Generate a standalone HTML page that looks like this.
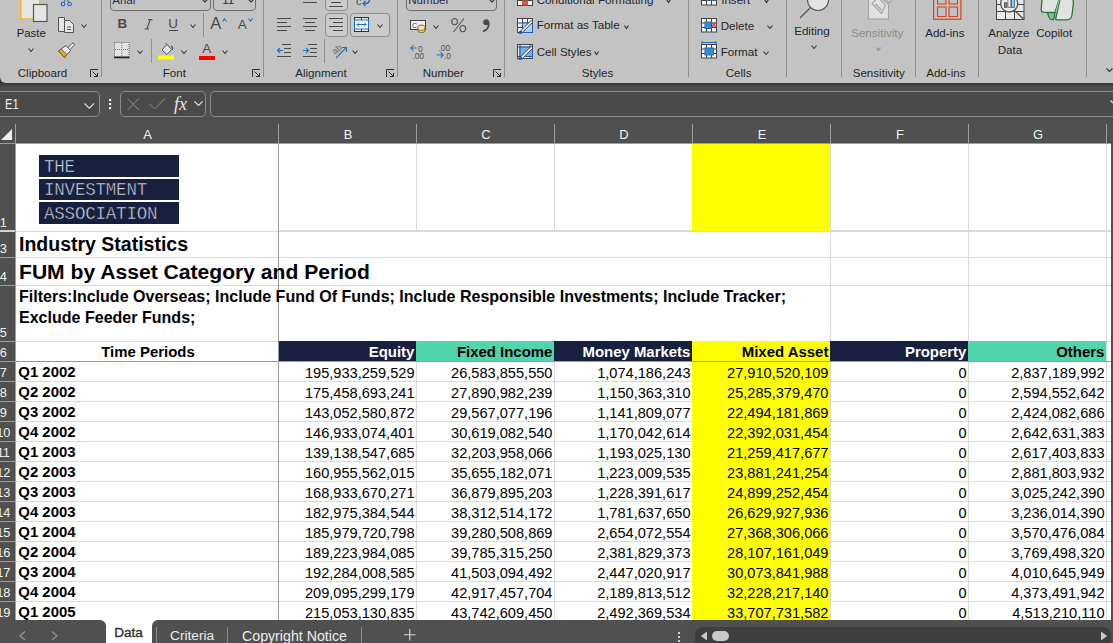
<!DOCTYPE html><html><head><meta charset="utf-8"><style>
*{margin:0;padding:0;box-sizing:border-box}
html,body{width:1113px;height:643px;overflow:hidden;background:#505050;font-family:"Liberation Sans", sans-serif}
.a{position:absolute}
.rl{position:absolute;font-size:11.6px;color:#262626;white-space:nowrap;line-height:1}
.sep{position:absolute;width:1px;background:#8f8f8f}
.cell{position:absolute;white-space:nowrap;line-height:1;color:#000}
</style></head><body>

<div class="a" style="left:0;top:0;width:1113px;height:83px;background:#3c3c3c"></div>
<div class="a" style="left:0;top:83px;width:1113px;height:5px;background:linear-gradient(#383838,#505050)"></div>
<div class="a" style="left:0;top:0;width:1113px;height:82.5px;background:#c3c3c3;border-bottom-left-radius:6px"></div>
<div class="sep" style="left:101px;top:0px;height:77px"></div>
<div class="sep" style="left:263px;top:0px;height:77px"></div>
<div class="sep" style="left:397px;top:0px;height:77px"></div>
<div class="sep" style="left:504px;top:0px;height:77px"></div>
<div class="sep" style="left:688px;top:0px;height:77px"></div>
<div class="sep" style="left:786px;top:0px;height:77px"></div>
<div class="sep" style="left:841px;top:0px;height:77px"></div>
<div class="sep" style="left:915px;top:0px;height:77px"></div>
<div class="sep" style="left:978px;top:0px;height:77px"></div>
<div class="sep" style="left:1086px;top:0px;height:77px"></div>
<svg class="a" style="left:20px;top:-4px;overflow:visible" width="30" height="26" viewBox="0 0 30 26"><rect x="0.8" y="0" width="19" height="23" fill="#e6e6e6" stroke="#f0b73a" stroke-width="1.6"/><rect x="13.5" y="8.5" width="13.5" height="17" fill="#e4e4e4" stroke="#555" stroke-width="1.2"/></svg>
<svg class="a" style="left:61px;top:-4px;overflow:visible" width="11" height="11" viewBox="0 0 11 11"><circle cx="2" cy="8" r="1.8" fill="none" stroke="#1f6fc0" stroke-width="1.1"/><circle cx="8.5" cy="8" r="1.8" fill="none" stroke="#1f6fc0" stroke-width="1.1"/><path d="M3 6 L6 0 M7.5 6 L4.5 0" stroke="#555" stroke-width="1"/></svg>
<div class="rl" style="left:16.8px;top:27.7px;font-size:11.3px;color:#262626;">Paste</div>
<svg class="a" style="left:28px;top:48px;overflow:visible" width="6" height="4" viewBox="0 0 6 4"><path d="M0.5 0.5 L3.0 3.5 L5.5 0.5" fill="none" stroke="#333" stroke-width="1.1"/></svg>
<svg class="a" style="left:58px;top:17px;overflow:visible" width="16" height="16" viewBox="0 0 16 16"><path d="M0.5 0.5 H6.5 V14.5 H0.5 Z" fill="#e4e4e4" stroke="#555" stroke-width="1"/><path d="M6.5 3.5 H11.5 L15.5 7.5 V15.5 H6.5 Z" fill="#e8e8e8" stroke="#555" stroke-width="1"/><path d="M9 10 H13 M9 12.5 H13" stroke="#555" stroke-width="1"/></svg>
<svg class="a" style="left:81px;top:24px;overflow:visible" width="6" height="4" viewBox="0 0 6 4"><path d="M0.5 0.5 L3.0 3.5 L5.5 0.5" fill="none" stroke="#333" stroke-width="1.1"/></svg>
<svg class="a" style="left:57px;top:42px;overflow:visible" width="18" height="17" viewBox="0 0 18 17"><path d="M10.5 6 L15 1.5 A1.4 1.4 0 0 1 17 3.5 L12.5 8" fill="#e6e6e6" stroke="#555" stroke-width="1"/><path d="M1.5 9 L9 3.5 L13.5 8.5 L7.5 15.5 Z" fill="#ececec" stroke="#555" stroke-width="1"/><path d="M1.5 9 L7.5 15.5 L10 12.5 L4 7 Z" fill="#e8a830" stroke="#7a5010" stroke-width="0.9"/></svg>
<div class="rl" style="left:17.7px;top:67.2px;font-size:11.6px;color:#262626;">Clipboard</div>
<svg class="a" style="left:89.5px;top:69px;overflow:visible" width="9" height="9" viewBox="0 0 9 9"><path d="M0.5 8 V0.5 H8" fill="none" stroke="#333" stroke-width="1"/><path d="M2.5 2.5 L7.5 7.5 M4 7.5 H7.5 V4" fill="none" stroke="#333" stroke-width="1"/></svg>
<div class="a" style="left:110px;top:-6px;width:101px;height:17px;border:1px solid #6e6e6e;border-radius:4px"></div>
<div class="rl" style="left:112.2px;top:-6.2px;font-size:11.6px;color:#2a2a50;">Arial</div>
<svg class="a" style="left:202px;top:-1px;overflow:visible" width="6" height="4" viewBox="0 0 6 4"><path d="M0.5 0.5 L3 3 L5.5 0.5" fill="none" stroke="#333" stroke-width="1.1"/></svg>
<div class="a" style="left:213px;top:-6px;width:43px;height:17px;border:1px solid #6e6e6e;border-radius:4px"></div>
<div class="rl" style="left:222.2px;top:-6.2px;font-size:11.6px;color:#2a2a50;">11</div>
<svg class="a" style="left:248px;top:-1px;overflow:visible" width="6" height="4" viewBox="0 0 6 4"><path d="M0.5 0.5 L3 3 L5.5 0.5" fill="none" stroke="#333" stroke-width="1.1"/></svg>
<div class="rl" style="left:117.5px;top:17.1px;font-size:13.4px;color:#4a4a4a;font-weight:bold">B</div>
<svg class="a" style="left:144px;top:19px;overflow:visible" width="9" height="11" viewBox="0 0 9 11"><path d="M4 0.6 H8.5 M0.5 10 H5 M6.3 0.6 L2.8 10" fill="none" stroke="#555" stroke-width="1.2"/></svg>
<div class="rl" style="left:168.2px;top:17.1px;font-size:13.4px;color:#4a4a4a;">U</div>
<div class="a" style="left:169px;top:30px;width:9px;height:1px;background:#4a4a4a"></div>
<svg class="a" style="left:190px;top:24px;overflow:visible" width="6" height="4" viewBox="0 0 6 4"><path d="M0.5 0.5 L3.0 3.5 L5.5 0.5" fill="none" stroke="#333" stroke-width="1.1"/></svg>
<div class="sep" style="left:203px;top:13px;height:24px"></div>
<div class="rl" style="left:210.2px;top:15.2px;font-size:16.5px;color:#4a4a4a;">A</div>
<svg class="a" style="left:222px;top:18px;overflow:visible" width="5" height="4" viewBox="0 0 5 4"><path d="M0.5 3.5 L2.5 0.8 L4.5 3.5" fill="none" stroke="#1f6fc0" stroke-width="1.1"/></svg>
<div class="rl" style="left:237.7px;top:18.0px;font-size:13.5px;color:#4a4a4a;">A</div>
<svg class="a" style="left:247.5px;top:18px;overflow:visible" width="5" height="4" viewBox="0 0 5 4"><path d="M0.5 0.5 L2.5 3.2 L4.5 0.5" fill="none" stroke="#1f6fc0" stroke-width="1.1"/></svg>
<svg class="a" style="left:114px;top:42px;overflow:visible" width="16" height="17" viewBox="0 0 16 17"><rect x="0.5" y="0.5" width="14.5" height="14" fill="#e2e2e2" stroke="#666" stroke-width="1" stroke-dasharray="1 1"/><path d="M7.75 1 V14.5 M1 7.5 H15" stroke="#777" stroke-width="1" stroke-dasharray="1 1"/><path d="M0 15.5 H15.5" stroke="#222" stroke-width="1.6"/></svg>
<svg class="a" style="left:137px;top:49.5px;overflow:visible" width="6" height="4" viewBox="0 0 6 4"><path d="M0.5 0.5 L3.0 3.5 L5.5 0.5" fill="none" stroke="#333" stroke-width="1.1"/></svg>
<div class="sep" style="left:151px;top:39px;height:24px"></div>
<svg class="a" style="left:158px;top:42px;overflow:visible" width="17" height="18" viewBox="0 0 17 18"><path d="M4 8 L9 2.5 L13.5 7.5 L9 12.5 Z" fill="#e8e8e8" stroke="#555" stroke-width="1"/><path d="M9 2.5 L7.5 1" stroke="#555" stroke-width="1"/><path d="M13 4 Q15 5 14.5 8" fill="none" stroke="#1f6fc0" stroke-width="1.4"/><rect x="0" y="13.5" width="16" height="4" fill="#ffff00"/></svg>
<svg class="a" style="left:181px;top:49.5px;overflow:visible" width="6" height="4" viewBox="0 0 6 4"><path d="M0.5 0.5 L3.0 3.5 L5.5 0.5" fill="none" stroke="#333" stroke-width="1.1"/></svg>
<div class="rl" style="left:202.2px;top:41.6px;font-size:13.4px;color:#4a4a4a;">A</div>
<div class="a" style="left:199px;top:55.5px;width:16px;height:4px;background:#ff0000"></div>
<svg class="a" style="left:222px;top:49.5px;overflow:visible" width="6" height="4" viewBox="0 0 6 4"><path d="M0.5 0.5 L3.0 3.5 L5.5 0.5" fill="none" stroke="#333" stroke-width="1.1"/></svg>
<div class="rl" style="left:162.7px;top:67.2px;font-size:11.6px;color:#262626;">Font</div>
<svg class="a" style="left:252px;top:69px;overflow:visible" width="9" height="9" viewBox="0 0 9 9"><path d="M0.5 8 V0.5 H8" fill="none" stroke="#333" stroke-width="1"/><path d="M2.5 2.5 L7.5 7.5 M4 7.5 H7.5 V4" fill="none" stroke="#333" stroke-width="1"/></svg>
<svg class="a" style="left:303px;top:2px;overflow:visible" width="15" height="2" viewBox="0 0 15 2"><path d="M0 0.5 H14" stroke="#4a4a4a" stroke-width="1"/></svg>
<div class="a" style="left:324.5px;top:-14px;width:23px;height:24.5px;border:1px solid #8e8e8e;border-radius:4px;background:#cbcbcb"></div>
<svg class="a" style="left:329px;top:1px;overflow:visible" width="15" height="6" viewBox="0 0 15 6"><path d="M2 1.5 H12 M0 5.5 H14" stroke="#4a4a4a" stroke-width="1"/></svg>
<svg class="a" style="left:356px;top:-4px;overflow:visible" width="15" height="11" viewBox="0 0 15 11"><text x="0" y="9" font-size="11" fill="#555" font-family="Liberation Sans">c</text><path d="M11 0 C14.5 1 14.5 7.5 9.5 7.5 H7 M9.5 5 L7 7.5 L9.5 10" fill="none" stroke="#1f6fc0" stroke-width="1.3"/></svg>
<svg class="a" style="left:277px;top:18px;overflow:visible" width="15" height="14" viewBox="0 0 15 14"><path d="M0.0 0.5 H14.0 M0.0 4.5 H10.0 M0.0 8.5 H14.0 M0.0 12.5 H10.0 " stroke="#4a4a4a" stroke-width="1"/></svg>
<svg class="a" style="left:303px;top:18px;overflow:visible" width="15" height="14" viewBox="0 0 15 14"><path d="M0.0 0.5 H14.0 M2.0 4.5 H12.0 M0.0 8.5 H14.0 M2.0 12.5 H12.0 " stroke="#4a4a4a" stroke-width="1"/></svg>
<div class="a" style="left:324.5px;top:13px;width:23px;height:23.5px;border:1px solid #8e8e8e;border-radius:4px;background:#cbcbcb"></div>
<svg class="a" style="left:329px;top:18px;overflow:visible" width="15" height="14" viewBox="0 0 15 14"><path d="M0.0 0.5 H14.0 M4.0 4.5 H14.0 M0.0 8.5 H14.0 M4.0 12.5 H14.0 " stroke="#4a4a4a" stroke-width="1"/></svg>
<div class="a" style="left:350px;top:13px;width:39.5px;height:23.5px;border:1px solid #8e8e8e;border-radius:4px;background:#cbcbcb"></div>
<svg class="a" style="left:354px;top:17px;overflow:visible" width="15" height="15" viewBox="0 0 15 15"><rect x="0.5" y="0.5" width="14" height="14" fill="#e8e8e8" stroke="#333" stroke-width="1"/><path d="M7.5 0.5 V3 M7.5 12 V14.5" stroke="#333" stroke-width="1"/><rect x="0.5" y="3" width="14" height="9" fill="#fafafa" stroke="#1f6fc0" stroke-width="1"/><path d="M3 7.5 H12 M5 5.5 L3 7.5 L5 9.5 M10 5.5 L12 7.5 L10 9.5" fill="none" stroke="#1f6fc0" stroke-width="1"/></svg>
<svg class="a" style="left:377px;top:23.5px;overflow:visible" width="6" height="4" viewBox="0 0 6 4"><path d="M0.5 0.5 L3.0 3.5 L5.5 0.5" fill="none" stroke="#333" stroke-width="1.1"/></svg>
<svg class="a" style="left:277px;top:43.5px;overflow:visible" width="15" height="14" viewBox="0 0 15 14"><path d="M5 0.5 H14 M7 4.5 H14 M7 8.5 H14 M0 12.5 H14" stroke="#4a4a4a" stroke-width="1"/><path d="M0.5 6.5 H6 M3 4 L0.5 6.5 L3 9" fill="none" stroke="#1f6fc0" stroke-width="1.1"/></svg>
<svg class="a" style="left:303px;top:43.5px;overflow:visible" width="15" height="14" viewBox="0 0 15 14"><path d="M5 0.5 H14 M7 4.5 H14 M7 8.5 H14 M0 12.5 H14" stroke="#4a4a4a" stroke-width="1"/><path d="M0 6.5 H5.5 M3 4 L5.5 6.5 L3 9" fill="none" stroke="#1f6fc0" stroke-width="1.1"/></svg>
<div class="sep" style="left:324px;top:39px;height:24px"></div>
<svg class="a" style="left:331px;top:43px;overflow:visible" width="17" height="16" viewBox="0 0 17 16"><text x="1" y="10" font-size="9" fill="#666" font-family="Liberation Sans" transform="rotate(-40 5 7)">ab</text><path d="M5 15 L15.5 4.5 M11 4.5 H15.5 V9" fill="none" stroke="#1f6fc0" stroke-width="1.1"/></svg>
<svg class="a" style="left:352px;top:49.5px;overflow:visible" width="6" height="4" viewBox="0 0 6 4"><path d="M0.5 0.5 L3.0 3.5 L5.5 0.5" fill="none" stroke="#333" stroke-width="1.1"/></svg>
<div class="rl" style="left:295.2px;top:67.2px;font-size:11.6px;color:#262626;">Alignment</div>
<svg class="a" style="left:386px;top:69px;overflow:visible" width="9" height="9" viewBox="0 0 9 9"><path d="M0.5 8 V0.5 H8" fill="none" stroke="#333" stroke-width="1"/><path d="M2.5 2.5 L7.5 7.5 M4 7.5 H7.5 V4" fill="none" stroke="#333" stroke-width="1"/></svg>
<div class="a" style="left:406px;top:-6px;width:91px;height:16.5px;border:1px solid #6e6e6e;border-radius:4px"></div>
<div class="rl" style="left:408.2px;top:-6.2px;font-size:11.6px;color:#2a2a50;">Number</div>
<svg class="a" style="left:489px;top:-1.5px;overflow:visible" width="6" height="4" viewBox="0 0 6 4"><path d="M0.5 0.5 L3 3 L5.5 0.5" fill="none" stroke="#333" stroke-width="1.1"/></svg>
<svg class="a" style="left:410px;top:20px;overflow:visible" width="17" height="13" viewBox="0 0 17 13"><rect x="0.5" y="0.5" width="15" height="9" fill="#f0f0f0" stroke="#444" stroke-width="1"/><text x="2" y="8" font-size="7" fill="#444" font-family="Liberation Sans">C</text><ellipse cx="11.5" cy="6.5" rx="3.5" ry="1.4" fill="#f0e0b0" stroke="#7a5a10" stroke-width="0.9"/><path d="M8 6.5 V11 A3.5 1.4 0 0 0 15 11 V6.5" fill="#f0e0b0" stroke="#7a5a10" stroke-width="0.9"/><path d="M8 9 A3.5 1.4 0 0 0 15 9" fill="none" stroke="#7a5a10" stroke-width="0.8"/></svg>
<svg class="a" style="left:433px;top:24.5px;overflow:visible" width="6" height="4" viewBox="0 0 6 4"><path d="M0.5 0.5 L3.0 3.5 L5.5 0.5" fill="none" stroke="#333" stroke-width="1.1"/></svg>
<svg class="a" style="left:451px;top:18px;overflow:visible" width="16" height="15" viewBox="0 0 16 15"><ellipse cx="3.6" cy="3.6" rx="2.9" ry="3.1" fill="none" stroke="#555" stroke-width="1.1"/><ellipse cx="11.8" cy="10.6" rx="2.9" ry="3.1" fill="none" stroke="#555" stroke-width="1.1"/><path d="M13 0.5 L2.5 14" stroke="#555" stroke-width="1.1"/></svg>
<svg class="a" style="left:481.5px;top:19px;overflow:visible" width="8" height="13" viewBox="0 0 8 13"><circle cx="4.2" cy="3.2" r="3" fill="#4a4a4a"/><path d="M6.8 3.5 C7.3 8 5 11 1 12.5" fill="none" stroke="#4a4a4a" stroke-width="1.6"/></svg>
<svg class="a" style="left:410px;top:43px;overflow:visible" width="16" height="16" viewBox="0 0 16 16"><path d="M1 5 H6.5 M3.5 2 L0.8 5 L3.5 8" fill="none" stroke="#1f6fc0" stroke-width="1.1"/><text x="8" y="8.5" font-size="8.5" fill="#555" font-family="Liberation Sans">0</text><text x="2.5" y="15.5" font-size="8.5" fill="#555" font-family="Liberation Sans">.00</text></svg>
<svg class="a" style="left:436px;top:43px;overflow:visible" width="16" height="16" viewBox="0 0 16 16"><text x="2.5" y="8" font-size="8.5" fill="#555" font-family="Liberation Sans">.00</text><path d="M0.5 12 H7 M4.5 9 L7.2 12 L4.5 15" fill="none" stroke="#1f6fc0" stroke-width="1.1"/><text x="8" y="15.5" font-size="8.5" fill="#555" font-family="Liberation Sans">.0</text></svg>
<div class="rl" style="left:422.7px;top:67.2px;font-size:11.6px;color:#262626;">Number</div>
<svg class="a" style="left:493px;top:69px;overflow:visible" width="9" height="9" viewBox="0 0 9 9"><path d="M0.5 8 V0.5 H8" fill="none" stroke="#333" stroke-width="1"/><path d="M2.5 2.5 L7.5 7.5 M4 7.5 H7.5 V4" fill="none" stroke="#333" stroke-width="1"/></svg>
<svg class="a" style="left:517px;top:-9px;overflow:visible" width="16" height="15" viewBox="0 0 16 15"><rect x="0.5" y="0.5" width="15" height="14" fill="#f4f4f4" stroke="#444" stroke-width="1"/><path d="M0.5 5 H15.5 M0.5 9.5 H15.5 M5.5 0.5 V14.5 M10.5 0.5 V14.5" stroke="#444" stroke-width="1"/><rect x="5" y="9.5" width="6" height="5" fill="#d9534f"/></svg>
<div class="rl" style="left:536.7px;top:-6.2px;font-size:11.6px;color:#262626;">Conditional Formatting</div>
<svg class="a" style="left:666px;top:-1px;overflow:visible" width="5" height="4" viewBox="0 0 5 4"><path d="M0.5 0.5 L2.5 3.5 L4.5 0.5" fill="none" stroke="#333" stroke-width="1.1"/></svg>
<svg class="a" style="left:517px;top:18px;overflow:visible" width="16" height="15" viewBox="0 0 16 15"><rect x="0.5" y="0.5" width="15" height="14" fill="#f4f4f4" stroke="#444" stroke-width="1"/><path d="M0.5 5 H15.5 M0.5 9.5 H15.5 M5.5 0.5 V14.5 M10.5 0.5 V14.5" stroke="#444" stroke-width="1"/><rect x="5.5" y="5" width="10" height="9.5" fill="#a8d4f8" stroke="#1a5fb4" stroke-width="1"/><path d="M3 13.5 L13.5 3 A1.2 1.2 0 0 1 15.2 4.7 L4.7 15.2 Z" fill="#f2f2f2" stroke="#333" stroke-width="0.9"/><path d="M1.5 15.8 C1.8 13.5 2.5 12.5 4 12.5 L5.5 14 C5.5 15.5 4 16.3 1.5 15.8 Z" fill="#1a5fb4"/></svg>
<div class="rl" style="left:536.7px;top:19.3px;font-size:11.6px;color:#262626;">Format as Table</div>
<svg class="a" style="left:624px;top:24.5px;overflow:visible" width="5" height="4" viewBox="0 0 5 4"><path d="M0.5 0.5 L2.5 3.5 L4.5 0.5" fill="none" stroke="#333" stroke-width="1.1"/></svg>
<svg class="a" style="left:517px;top:44px;overflow:visible" width="16" height="15" viewBox="0 0 16 15"><rect x="0.5" y="0.5" width="15" height="14" fill="#f4f4f4" stroke="#444" stroke-width="1"/><path d="M0.5 3 H15.5 M0.5 12.5 H15.5 M3 0.5 V14.5 M13 0.5 V14.5" stroke="#444" stroke-width="1"/><rect x="3" y="3" width="12.5" height="9.5" fill="#70b0e8" stroke="#1a5fb4" stroke-width="1"/><path d="M3 13.5 L13.5 3 A1.2 1.2 0 0 1 15.2 4.7 L4.7 15.2 Z" fill="#f2f2f2" stroke="#333" stroke-width="0.9"/><path d="M1.5 15.8 C1.8 13.5 2.5 12.5 4 12.5 L5.5 14 C5.5 15.5 4 16.3 1.5 15.8 Z" fill="#1a5fb4"/></svg>
<div class="rl" style="left:536.7px;top:45.6px;font-size:11.6px;color:#262626;">Cell Styles</div>
<svg class="a" style="left:594px;top:50.5px;overflow:visible" width="5" height="4" viewBox="0 0 5 4"><path d="M0.5 0.5 L2.5 3.5 L4.5 0.5" fill="none" stroke="#333" stroke-width="1.1"/></svg>
<div class="rl" style="left:581.7px;top:67.2px;font-size:11.6px;color:#262626;">Styles</div>
<svg class="a" style="left:701px;top:-9px;overflow:visible" width="16" height="15" viewBox="0 0 16 15"><rect x="0.5" y="0.5" width="15" height="13.5" fill="#f4f4f4" stroke="#444" stroke-width="1"/><path d="M0.5 5 H15.5 M0.5 9.5 H15.5 M5.5 0.5 V14 M10.5 0.5 V14" stroke="#444" stroke-width="1"/><rect x="5.5" y="5" width="9" height="4.5" fill="#3d8bd8"/></svg>
<div class="rl" style="left:721.2px;top:-6.2px;font-size:11.6px;color:#262626;">Insert</div>
<svg class="a" style="left:764px;top:-1px;overflow:visible" width="5" height="4" viewBox="0 0 5 4"><path d="M0.5 0.5 L2.5 3.5 L4.5 0.5" fill="none" stroke="#333" stroke-width="1.1"/></svg>
<svg class="a" style="left:701px;top:17.5px;overflow:visible" width="16" height="15" viewBox="0 0 16 15"><rect x="0.5" y="0.5" width="15" height="13.5" fill="#f4f4f4" stroke="#444" stroke-width="1"/><path d="M0.5 5 H15.5 M0.5 9.5 H15.5 M5.5 0.5 V14 M10.5 0.5 V14" stroke="#444" stroke-width="1"/><rect x="4" y="4" width="6" height="6.5" fill="#3d8bd8" stroke="#1f6fc0" stroke-width="1"/><path d="M10.5 4 L15 9.5 M15 4 L10.5 9.5" stroke="#d9363e" stroke-width="1.2"/></svg>
<div class="rl" style="left:720.7px;top:19.8px;font-size:11.6px;color:#262626;">Delete</div>
<svg class="a" style="left:766.5px;top:24.5px;overflow:visible" width="6" height="4" viewBox="0 0 6 4"><path d="M0.5 0.5 L3.0 3.5 L5.5 0.5" fill="none" stroke="#333" stroke-width="1.1"/></svg>
<svg class="a" style="left:701px;top:44px;overflow:visible" width="16" height="15" viewBox="0 0 16 15"><rect x="0.5" y="0.5" width="15" height="13.5" fill="#f4f4f4" stroke="#444" stroke-width="1"/><path d="M0.5 5 H15.5 M0.5 9.5 H15.5 M5.5 0.5 V14 M10.5 0.5 V14" stroke="#444" stroke-width="1"/><rect x="4" y="4" width="8.5" height="7" fill="#3d8bd8" stroke="#1f6fc0" stroke-width="1"/><path d="M1 -1.5 H15 M1 -3 V0 M15 -3 V0" stroke="#1f6fc0" stroke-width="1"/></svg>
<div class="rl" style="left:720.7px;top:45.7px;font-size:11.6px;color:#262626;">Format</div>
<svg class="a" style="left:762.5px;top:50.5px;overflow:visible" width="6" height="4" viewBox="0 0 6 4"><path d="M0.5 0.5 L3.0 3.5 L5.5 0.5" fill="none" stroke="#333" stroke-width="1.1"/></svg>
<div class="rl" style="left:725.7px;top:67.2px;font-size:11.6px;color:#262626;">Cells</div>
<svg class="a" style="left:798px;top:-12px;overflow:visible" width="32" height="32" viewBox="0 0 32 32"><circle cx="20" cy="12" r="10.5" fill="#e4e4e4" stroke="#555" stroke-width="1.1"/><path d="M12.5 19.5 L2 30" stroke="#555" stroke-width="1.2"/></svg>
<div class="rl" style="left:794.2px;top:25.0px;font-size:11.6px;color:#262626;">Editing</div>
<svg class="a" style="left:811px;top:45px;overflow:visible" width="6" height="4" viewBox="0 0 6 4"><path d="M0.5 0.5 L3.0 3.5 L5.5 0.5" fill="none" stroke="#333" stroke-width="1.1"/></svg>
<svg class="a" style="left:860px;top:-6px;overflow:visible" width="36" height="26" viewBox="0 0 36 26"><rect x="8.5" y="0" width="20" height="25" fill="#e0e0e0" stroke="#a3a3a3" stroke-width="1.1"/><path d="M20 1 L33 1 L33 7 L28 11 L22 6 Z" fill="#b3b3b3"/><path d="M28 6.5 L33 1" stroke="#d8d8d8" stroke-width="2.5"/><path d="M12 9.5 L18 3.5 L25.5 11 L21.5 19.5 Z" fill="#e0e0e0" stroke="#a3a3a3" stroke-width="1.1"/><path d="M15.5 10 L21.5 16" stroke="#a8a8a8" stroke-width="1.6"/></svg>
<div class="rl" style="left:851.2px;top:27.3px;font-size:11.6px;color:#8a8a8a;">Sensitivity</div>
<svg class="a" style="left:876px;top:47px;overflow:visible" width="5" height="4" viewBox="0 0 5 4"><path d="M0.5 0.5 L2.5 3.5 L4.5 0.5" fill="none" stroke="#8a8a8a" stroke-width="1.1"/></svg>
<div class="rl" style="left:852.7px;top:67.2px;font-size:11.6px;color:#262626;">Sensitivity</div>
<svg class="a" style="left:933px;top:-10px;overflow:visible" width="29" height="30" viewBox="0 0 29 30"><rect x="0.6" y="0" width="27.3" height="29.3" fill="none" stroke="#d5441a" stroke-width="1.2"/><rect x="4.5" y="2" width="8.5" height="12" fill="none" stroke="#d5441a" stroke-width="1.1"/><rect x="16" y="2" width="8.5" height="12" fill="none" stroke="#d5441a" stroke-width="1.1"/><rect x="4.5" y="17" width="8.5" height="9.5" fill="none" stroke="#d5441a" stroke-width="1.1"/><rect x="16" y="17" width="8.5" height="9.5" fill="none" stroke="#d5441a" stroke-width="1.1"/></svg>
<div class="rl" style="left:925.2px;top:26.9px;font-size:11.6px;color:#262626;">Add-ins</div>
<div class="rl" style="left:926.2px;top:67.2px;font-size:11.6px;color:#262626;">Add-ins</div>
<svg class="a" style="left:996px;top:-10px;overflow:visible" width="29" height="30" viewBox="0 0 29 30"><rect x="0.5" y="0.5" width="27.5" height="29" fill="#e8e8e8" stroke="#444" stroke-width="1"/><path d="M0.5 14.5 H28 M0.5 21.5 H28 M9.5 14.5 V29.5 M18.5 14.5 V29.5" stroke="#444" stroke-width="1"/><path d="M18 20 L28 29.5" stroke="#555" stroke-width="1.3"/><circle cx="13.2" cy="13.5" r="8.5" fill="#ececec" stroke="#555" stroke-width="1.3"/><rect x="8.5" y="12.8" width="2.5" height="4.5" fill="#8a8a8a" stroke="#444" stroke-width="0.8"/><rect x="12" y="9" width="2.8" height="8.3" fill="#fff" stroke="#555" stroke-width="0.8"/><rect x="15.5" y="7" width="2.8" height="10.3" fill="#a8d4f8" stroke="#1a5a9a" stroke-width="0.9"/></svg>
<div class="rl" style="left:988.2px;top:26.7px;font-size:11.6px;color:#262626;">Analyze</div>
<div class="rl" style="left:997.7px;top:43.9px;font-size:11.6px;color:#262626;">Data</div>
<svg class="a" style="left:1040px;top:-8px;overflow:visible" width="34" height="30" viewBox="0 0 34 30"><path d="M8 -2 C4 -2 2.5 2 2.2 6 L1.2 17 C1 19 2 20.4 4.5 20.4 L15 20.4 L22 -2 Z" fill="#e2e2e2" stroke="#1f7a3c" stroke-width="1.3"/><path d="M22 -2 L15.8 26.2 C15.6 27.2 16 27.9 17 27.9 L27 27.9 C30 27.9 31.5 26 32 23 L33.3 12 C33.6 7 31 -2 25 -2 Z" fill="#e2e2e2" stroke="#1f7a3c" stroke-width="1.3"/><path d="M7.5 20.6 L15 20.6 L13.6 27.6 L11.5 27.6 C9.5 27.6 8.5 25 7.5 20.6 Z" fill="#86c09a" stroke="#1f7a3c" stroke-width="1.2"/><path d="M16 20 L21.5 -2" stroke="#a9c9b2" stroke-width="1"/></svg>
<div class="rl" style="left:1036.2px;top:26.7px;font-size:11.6px;color:#262626;">Copilot</div>
<svg class="a" style="left:1106px;top:67.5px;overflow:visible" width="7" height="4" viewBox="0 0 7 4"><path d="M0.5 0.5 L3.5 3.5 L6.5 0.5" fill="none" stroke="#333" stroke-width="1.1"/></svg>
<div class="a" style="left:-6px;top:91px;width:106px;height:26px;border:1px solid #8c8c8c;border-radius:5px;background:#4a4a4a"></div>
<div class="a" style="left:4.5px;top:97px;font-size:14px;color:#f0f0f0;line-height:1;transform:scaleX(0.8);transform-origin:0 0">E1</div>
<div class="a" style="left:120px;top:91px;width:86px;height:26px;border:1px solid #8c8c8c;border-radius:5px;background:#4a4a4a"></div>
<div class="a" style="left:210px;top:91px;width:920px;height:26px;border:1px solid #8c8c8c;border-radius:5px;background:#4a4a4a"></div>
<svg class="a" style="left:1110px;top:100px;overflow:visible" width="10" height="6" viewBox="0 0 10 6"><path d="M0.5 0.5 L5 5 L9.5 0.5" fill="none" stroke="#e0e0e0" stroke-width="1.2"/></svg>
<svg class="a" style="left:83.5px;top:102.5px;overflow:visible" width="11" height="6" viewBox="0 0 11 6"><path d="M0.5 0.5 L5.25 5.2 L10 0.5" fill="none" stroke="#e0e0e0" stroke-width="1.1"/></svg>
<svg class="a" style="left:109px;top:99px;overflow:visible" width="3" height="11" viewBox="0 0 3 11"><rect x="0" y="0" width="2.2" height="2.2" fill="#f0f0f0"/><rect x="0" y="4" width="2.2" height="2.2" fill="#f0f0f0"/><rect x="0" y="8" width="2.2" height="2.2" fill="#f0f0f0"/></svg>
<svg class="a" style="left:127px;top:97.5px;overflow:visible" width="13" height="13" viewBox="0 0 13 13"><path d="M0.5 0.5 L12 12 M12 0.5 L0.5 12" stroke="#8c8c8c" stroke-width="1"/></svg>
<svg class="a" style="left:148.5px;top:98px;overflow:visible" width="17" height="12" viewBox="0 0 17 12"><path d="M0.5 6 L5.5 11 L16 0.5" fill="none" stroke="#8c8c8c" stroke-width="1"/></svg>
<div class="a" style="left:174px;top:95px;font-family:'Liberation Serif',serif;font-style:italic;font-size:18px;color:#e8e8e8;line-height:1">fx</div>
<svg class="a" style="left:194px;top:101px;overflow:visible" width="10" height="6" viewBox="0 0 10 6"><path d="M0.5 0.5 L4.5 4.5 L8.5 0.5" fill="none" stroke="#e0e0e0" stroke-width="1.1"/></svg>
<div class="a" style="left:16px;top:128.8px;width:263px;text-align:center;font-size:12.9px;color:#f2f2f2;line-height:1">A</div>
<div class="a" style="left:279px;top:128.8px;width:138px;text-align:center;font-size:12.9px;color:#f2f2f2;line-height:1">B</div>
<div class="a" style="left:417px;top:128.8px;width:138px;text-align:center;font-size:12.9px;color:#f2f2f2;line-height:1">C</div>
<div class="a" style="left:555px;top:128.8px;width:138px;text-align:center;font-size:12.9px;color:#f2f2f2;line-height:1">D</div>
<div class="a" style="left:693px;top:128.8px;width:138px;text-align:center;font-size:12.9px;color:#f2f2f2;line-height:1">E</div>
<div class="a" style="left:831px;top:128.8px;width:138px;text-align:center;font-size:12.9px;color:#f2f2f2;line-height:1">F</div>
<div class="a" style="left:969px;top:128.8px;width:138px;text-align:center;font-size:12.9px;color:#f2f2f2;line-height:1">G</div>
<div class="a" style="left:15px;top:124px;width:1px;height:19px;background:#9d9d9d"></div>
<div class="a" style="left:278px;top:124px;width:1px;height:19px;background:#9d9d9d"></div>
<div class="a" style="left:416px;top:124px;width:1px;height:19px;background:#9d9d9d"></div>
<div class="a" style="left:554px;top:124px;width:1px;height:19px;background:#9d9d9d"></div>
<div class="a" style="left:692px;top:124px;width:1px;height:19px;background:#9d9d9d"></div>
<div class="a" style="left:830px;top:124px;width:1px;height:19px;background:#9d9d9d"></div>
<div class="a" style="left:968px;top:124px;width:1px;height:19px;background:#9d9d9d"></div>
<div class="a" style="left:1106px;top:124px;width:1px;height:19px;background:#9d9d9d"></div>
<svg class="a" style="left:0;top:124px" width="16" height="20"><path d="M1 16 L12 16 L12 5 Z" fill="#efefef"/></svg>
<div class="a" style="left:0;top:143px;width:1111px;height:1px;background:#9d9d9d"></div>
<div class="a" style="left:16px;top:144px;width:1095px;height:476px;background:#fff"></div>
<div class="a" style="left:16px;top:231px;width:1095px;height:1px;background:#dadada"></div>
<div class="a" style="left:16px;top:257px;width:1095px;height:1px;background:#dadada"></div>
<div class="a" style="left:16px;top:285px;width:1095px;height:1px;background:#dadada"></div>
<div class="a" style="left:16px;top:341px;width:1095px;height:1px;background:#dadada"></div>
<div class="a" style="left:16px;top:361px;width:1095px;height:1px;background:#dadada"></div>
<div class="a" style="left:16px;top:381px;width:1095px;height:1px;background:#dadada"></div>
<div class="a" style="left:16px;top:401px;width:1095px;height:1px;background:#dadada"></div>
<div class="a" style="left:16px;top:421px;width:1095px;height:1px;background:#dadada"></div>
<div class="a" style="left:16px;top:441px;width:1095px;height:1px;background:#dadada"></div>
<div class="a" style="left:16px;top:461px;width:1095px;height:1px;background:#dadada"></div>
<div class="a" style="left:16px;top:481px;width:1095px;height:1px;background:#dadada"></div>
<div class="a" style="left:16px;top:501px;width:1095px;height:1px;background:#dadada"></div>
<div class="a" style="left:16px;top:521px;width:1095px;height:1px;background:#dadada"></div>
<div class="a" style="left:16px;top:541px;width:1095px;height:1px;background:#dadada"></div>
<div class="a" style="left:16px;top:561px;width:1095px;height:1px;background:#dadada"></div>
<div class="a" style="left:16px;top:581px;width:1095px;height:1px;background:#dadada"></div>
<div class="a" style="left:16px;top:601px;width:1095px;height:1px;background:#dadada"></div>
<div class="a" style="left:279px;top:230px;width:832px;height:2px;background:#dadada"></div>
<div class="a" style="left:416px;top:144px;width:1px;height:87px;background:#dadada"></div>
<div class="a" style="left:416px;top:341px;width:1px;height:279px;background:#dadada"></div>
<div class="a" style="left:554px;top:144px;width:1px;height:87px;background:#dadada"></div>
<div class="a" style="left:554px;top:341px;width:1px;height:279px;background:#dadada"></div>
<div class="a" style="left:692px;top:144px;width:1px;height:87px;background:#dadada"></div>
<div class="a" style="left:692px;top:341px;width:1px;height:279px;background:#dadada"></div>
<div class="a" style="left:830px;top:144px;width:1px;height:476px;background:#dadada"></div>
<div class="a" style="left:968px;top:144px;width:1px;height:476px;background:#dadada"></div>
<div class="a" style="left:1106px;top:144px;width:1px;height:476px;background:#dadada"></div>
<div class="a" style="left:692px;top:144px;width:138px;height:87px;background:#ffff00"></div>
<div class="a" style="left:692px;top:361px;width:138px;height:259px;background:#ffff00"></div>
<div class="a" style="left:279px;top:341px;width:137px;height:20px;background:#17203f"></div>
<div class="cell" style="left:278px;top:345px;width:136.4px;text-align:right;font-weight:bold;font-size:14.95px;color:#fff">Equity</div>
<div class="a" style="left:416px;top:341px;width:138px;height:20px;background:#4fd5ab"></div>
<div class="cell" style="left:416px;top:345px;width:136.4px;text-align:right;font-weight:bold;font-size:14.95px;color:#000">Fixed Income</div>
<div class="a" style="left:554px;top:341px;width:138px;height:20px;background:#17203f"></div>
<div class="cell" style="left:554px;top:345px;width:136.4px;text-align:right;font-weight:bold;font-size:14.95px;color:#fff">Money Markets</div>
<div class="a" style="left:692px;top:341px;width:138px;height:20px;background:#ffff00"></div>
<div class="cell" style="left:692px;top:345px;width:136.4px;text-align:right;font-weight:bold;font-size:14.95px;color:#000">Mixed Asset</div>
<div class="a" style="left:830px;top:341px;width:138px;height:20px;background:#17203f"></div>
<div class="cell" style="left:830px;top:345px;width:136.4px;text-align:right;font-weight:bold;font-size:14.95px;color:#fff">Property</div>
<div class="a" style="left:968px;top:341px;width:138px;height:20px;background:#4fd5ab"></div>
<div class="cell" style="left:968px;top:345px;width:136.4px;text-align:right;font-weight:bold;font-size:14.95px;color:#000">Others</div>
<div class="a" style="left:278px;top:144px;width:1px;height:476px;background:#9a9a9a"></div>
<div class="a" style="left:16px;top:361px;width:1095px;height:1px;background:#9a9a9a"></div>
<div class="a" style="left:39px;top:155.0px;width:140px;height:21.8px;background:#17203f"></div>
<div class="a" style="left:44px;top:159.0px;font-family:'Liberation Mono',monospace;font-size:17.5px;letter-spacing:-0.2px;color:#d4d6de;-webkit-text-stroke:0.45px #17203f;line-height:1">THE</div>
<div class="a" style="left:39px;top:178.6px;width:140px;height:21.2px;background:#17203f"></div>
<div class="a" style="left:44px;top:182.0px;font-family:'Liberation Mono',monospace;font-size:17.5px;letter-spacing:-0.2px;color:#d4d6de;-webkit-text-stroke:0.45px #17203f;line-height:1">INVESTMENT</div>
<div class="a" style="left:39px;top:201.8px;width:140px;height:22.0px;background:#17203f"></div>
<div class="a" style="left:44px;top:205.8px;font-family:'Liberation Mono',monospace;font-size:17.5px;letter-spacing:-0.2px;color:#d4d6de;-webkit-text-stroke:0.45px #17203f;line-height:1">ASSOCIATION</div>
<div class="cell" style="left:19px;top:235px;font-weight:bold;font-size:19.5px">Industry Statistics</div>
<div class="cell" style="left:19px;top:260.8px;font-weight:bold;font-size:21.1px">FUM by Asset Category and Period</div>
<div class="cell" style="left:19px;top:286px;font-weight:bold;font-size:16.05px;line-height:20.6px">Filters:Include Overseas; Include Fund Of Funds; Include Responsible Investments; Include Tracker;<br>Exclude Feeder Funds;</div>
<div class="cell" style="left:17px;top:344.7px;width:262px;text-align:center;font-weight:bold;font-size:14.95px">Time Periods</div>
<div class="cell" style="left:18.3px;top:364.5px;font-weight:bold;font-size:14.95px">Q1 2002</div>
<div class="cell" style="left:278px;top:365.5px;width:136.5px;text-align:right;font-size:14.6px">195,933,259,529</div>
<div class="cell" style="left:416px;top:365.5px;width:136.5px;text-align:right;font-size:14.6px">26,583,855,550</div>
<div class="cell" style="left:554px;top:365.5px;width:136.5px;text-align:right;font-size:14.6px">1,074,186,243</div>
<div class="cell" style="left:692px;top:365.5px;width:136.5px;text-align:right;font-size:14.6px">27,910,520,109</div>
<div class="cell" style="left:830px;top:365.5px;width:136.5px;text-align:right;font-size:14.6px">0</div>
<div class="cell" style="left:968px;top:365.5px;width:136.5px;text-align:right;font-size:14.6px">2,837,189,992</div>
<div class="cell" style="left:18.3px;top:384.5px;font-weight:bold;font-size:14.95px">Q2 2002</div>
<div class="cell" style="left:278px;top:385.5px;width:136.5px;text-align:right;font-size:14.6px">175,458,693,241</div>
<div class="cell" style="left:416px;top:385.5px;width:136.5px;text-align:right;font-size:14.6px">27,890,982,239</div>
<div class="cell" style="left:554px;top:385.5px;width:136.5px;text-align:right;font-size:14.6px">1,150,363,310</div>
<div class="cell" style="left:692px;top:385.5px;width:136.5px;text-align:right;font-size:14.6px">25,285,379,470</div>
<div class="cell" style="left:830px;top:385.5px;width:136.5px;text-align:right;font-size:14.6px">0</div>
<div class="cell" style="left:968px;top:385.5px;width:136.5px;text-align:right;font-size:14.6px">2,594,552,642</div>
<div class="cell" style="left:18.3px;top:404.5px;font-weight:bold;font-size:14.95px">Q3 2002</div>
<div class="cell" style="left:278px;top:405.5px;width:136.5px;text-align:right;font-size:14.6px">143,052,580,872</div>
<div class="cell" style="left:416px;top:405.5px;width:136.5px;text-align:right;font-size:14.6px">29,567,077,196</div>
<div class="cell" style="left:554px;top:405.5px;width:136.5px;text-align:right;font-size:14.6px">1,141,809,077</div>
<div class="cell" style="left:692px;top:405.5px;width:136.5px;text-align:right;font-size:14.6px">22,494,181,869</div>
<div class="cell" style="left:830px;top:405.5px;width:136.5px;text-align:right;font-size:14.6px">0</div>
<div class="cell" style="left:968px;top:405.5px;width:136.5px;text-align:right;font-size:14.6px">2,424,082,686</div>
<div class="cell" style="left:18.3px;top:424.5px;font-weight:bold;font-size:14.95px">Q4 2002</div>
<div class="cell" style="left:278px;top:425.5px;width:136.5px;text-align:right;font-size:14.6px">146,933,074,401</div>
<div class="cell" style="left:416px;top:425.5px;width:136.5px;text-align:right;font-size:14.6px">30,619,082,540</div>
<div class="cell" style="left:554px;top:425.5px;width:136.5px;text-align:right;font-size:14.6px">1,170,042,614</div>
<div class="cell" style="left:692px;top:425.5px;width:136.5px;text-align:right;font-size:14.6px">22,392,031,454</div>
<div class="cell" style="left:830px;top:425.5px;width:136.5px;text-align:right;font-size:14.6px">0</div>
<div class="cell" style="left:968px;top:425.5px;width:136.5px;text-align:right;font-size:14.6px">2,642,631,383</div>
<div class="cell" style="left:18.3px;top:444.5px;font-weight:bold;font-size:14.95px">Q1 2003</div>
<div class="cell" style="left:278px;top:445.5px;width:136.5px;text-align:right;font-size:14.6px">139,138,547,685</div>
<div class="cell" style="left:416px;top:445.5px;width:136.5px;text-align:right;font-size:14.6px">32,203,958,066</div>
<div class="cell" style="left:554px;top:445.5px;width:136.5px;text-align:right;font-size:14.6px">1,193,025,130</div>
<div class="cell" style="left:692px;top:445.5px;width:136.5px;text-align:right;font-size:14.6px">21,259,417,677</div>
<div class="cell" style="left:830px;top:445.5px;width:136.5px;text-align:right;font-size:14.6px">0</div>
<div class="cell" style="left:968px;top:445.5px;width:136.5px;text-align:right;font-size:14.6px">2,617,403,833</div>
<div class="cell" style="left:18.3px;top:464.5px;font-weight:bold;font-size:14.95px">Q2 2003</div>
<div class="cell" style="left:278px;top:465.5px;width:136.5px;text-align:right;font-size:14.6px">160,955,562,015</div>
<div class="cell" style="left:416px;top:465.5px;width:136.5px;text-align:right;font-size:14.6px">35,655,182,071</div>
<div class="cell" style="left:554px;top:465.5px;width:136.5px;text-align:right;font-size:14.6px">1,223,009,535</div>
<div class="cell" style="left:692px;top:465.5px;width:136.5px;text-align:right;font-size:14.6px">23,881,241,254</div>
<div class="cell" style="left:830px;top:465.5px;width:136.5px;text-align:right;font-size:14.6px">0</div>
<div class="cell" style="left:968px;top:465.5px;width:136.5px;text-align:right;font-size:14.6px">2,881,803,932</div>
<div class="cell" style="left:18.3px;top:484.5px;font-weight:bold;font-size:14.95px">Q3 2003</div>
<div class="cell" style="left:278px;top:485.5px;width:136.5px;text-align:right;font-size:14.6px">168,933,670,271</div>
<div class="cell" style="left:416px;top:485.5px;width:136.5px;text-align:right;font-size:14.6px">36,879,895,203</div>
<div class="cell" style="left:554px;top:485.5px;width:136.5px;text-align:right;font-size:14.6px">1,228,391,617</div>
<div class="cell" style="left:692px;top:485.5px;width:136.5px;text-align:right;font-size:14.6px">24,899,252,454</div>
<div class="cell" style="left:830px;top:485.5px;width:136.5px;text-align:right;font-size:14.6px">0</div>
<div class="cell" style="left:968px;top:485.5px;width:136.5px;text-align:right;font-size:14.6px">3,025,242,390</div>
<div class="cell" style="left:18.3px;top:504.5px;font-weight:bold;font-size:14.95px">Q4 2003</div>
<div class="cell" style="left:278px;top:505.5px;width:136.5px;text-align:right;font-size:14.6px">182,975,384,544</div>
<div class="cell" style="left:416px;top:505.5px;width:136.5px;text-align:right;font-size:14.6px">38,312,514,172</div>
<div class="cell" style="left:554px;top:505.5px;width:136.5px;text-align:right;font-size:14.6px">1,781,637,650</div>
<div class="cell" style="left:692px;top:505.5px;width:136.5px;text-align:right;font-size:14.6px">26,629,927,936</div>
<div class="cell" style="left:830px;top:505.5px;width:136.5px;text-align:right;font-size:14.6px">0</div>
<div class="cell" style="left:968px;top:505.5px;width:136.5px;text-align:right;font-size:14.6px">3,236,014,390</div>
<div class="cell" style="left:18.3px;top:524.5px;font-weight:bold;font-size:14.95px">Q1 2004</div>
<div class="cell" style="left:278px;top:525.5px;width:136.5px;text-align:right;font-size:14.6px">185,979,720,798</div>
<div class="cell" style="left:416px;top:525.5px;width:136.5px;text-align:right;font-size:14.6px">39,280,508,869</div>
<div class="cell" style="left:554px;top:525.5px;width:136.5px;text-align:right;font-size:14.6px">2,654,072,554</div>
<div class="cell" style="left:692px;top:525.5px;width:136.5px;text-align:right;font-size:14.6px">27,368,306,066</div>
<div class="cell" style="left:830px;top:525.5px;width:136.5px;text-align:right;font-size:14.6px">0</div>
<div class="cell" style="left:968px;top:525.5px;width:136.5px;text-align:right;font-size:14.6px">3,570,476,084</div>
<div class="cell" style="left:18.3px;top:544.5px;font-weight:bold;font-size:14.95px">Q2 2004</div>
<div class="cell" style="left:278px;top:545.5px;width:136.5px;text-align:right;font-size:14.6px">189,223,984,085</div>
<div class="cell" style="left:416px;top:545.5px;width:136.5px;text-align:right;font-size:14.6px">39,785,315,250</div>
<div class="cell" style="left:554px;top:545.5px;width:136.5px;text-align:right;font-size:14.6px">2,381,829,373</div>
<div class="cell" style="left:692px;top:545.5px;width:136.5px;text-align:right;font-size:14.6px">28,107,161,049</div>
<div class="cell" style="left:830px;top:545.5px;width:136.5px;text-align:right;font-size:14.6px">0</div>
<div class="cell" style="left:968px;top:545.5px;width:136.5px;text-align:right;font-size:14.6px">3,769,498,320</div>
<div class="cell" style="left:18.3px;top:564.5px;font-weight:bold;font-size:14.95px">Q3 2004</div>
<div class="cell" style="left:278px;top:565.5px;width:136.5px;text-align:right;font-size:14.6px">192,284,008,585</div>
<div class="cell" style="left:416px;top:565.5px;width:136.5px;text-align:right;font-size:14.6px">41,503,094,492</div>
<div class="cell" style="left:554px;top:565.5px;width:136.5px;text-align:right;font-size:14.6px">2,447,020,917</div>
<div class="cell" style="left:692px;top:565.5px;width:136.5px;text-align:right;font-size:14.6px">30,073,841,988</div>
<div class="cell" style="left:830px;top:565.5px;width:136.5px;text-align:right;font-size:14.6px">0</div>
<div class="cell" style="left:968px;top:565.5px;width:136.5px;text-align:right;font-size:14.6px">4,010,645,949</div>
<div class="cell" style="left:18.3px;top:584.5px;font-weight:bold;font-size:14.95px">Q4 2004</div>
<div class="cell" style="left:278px;top:585.5px;width:136.5px;text-align:right;font-size:14.6px">209,095,299,179</div>
<div class="cell" style="left:416px;top:585.5px;width:136.5px;text-align:right;font-size:14.6px">42,917,457,704</div>
<div class="cell" style="left:554px;top:585.5px;width:136.5px;text-align:right;font-size:14.6px">2,189,813,512</div>
<div class="cell" style="left:692px;top:585.5px;width:136.5px;text-align:right;font-size:14.6px">32,228,217,140</div>
<div class="cell" style="left:830px;top:585.5px;width:136.5px;text-align:right;font-size:14.6px">0</div>
<div class="cell" style="left:968px;top:585.5px;width:136.5px;text-align:right;font-size:14.6px">4,373,491,942</div>
<div class="cell" style="left:18.3px;top:604.5px;font-weight:bold;font-size:14.95px">Q1 2005</div>
<div class="cell" style="left:278px;top:605.5px;width:136.5px;text-align:right;font-size:14.6px">215,053,130,835</div>
<div class="cell" style="left:416px;top:605.5px;width:136.5px;text-align:right;font-size:14.6px">43,742,609,450</div>
<div class="cell" style="left:554px;top:605.5px;width:136.5px;text-align:right;font-size:14.6px">2,492,369,534</div>
<div class="cell" style="left:692px;top:605.5px;width:136.5px;text-align:right;font-size:14.6px">33,707,731,582</div>
<div class="cell" style="left:830px;top:605.5px;width:136.5px;text-align:right;font-size:14.6px">0</div>
<div class="cell" style="left:968px;top:605.5px;width:136.5px;text-align:right;font-size:14.6px">4,513,210,110</div>
<div class="a" style="left:-16.7px;top:217.0px;width:40px;text-align:center;font-size:12.8px;color:#f2f2f2;line-height:1">1</div>
<div class="a" style="left:0;top:231px;width:15px;height:1px;background:#9d9d9d"></div>
<div class="a" style="left:-16.7px;top:243.0px;width:40px;text-align:center;font-size:12.8px;color:#f2f2f2;line-height:1">3</div>
<div class="a" style="left:0;top:257px;width:15px;height:1px;background:#9d9d9d"></div>
<div class="a" style="left:-16.7px;top:271.0px;width:40px;text-align:center;font-size:12.8px;color:#f2f2f2;line-height:1">4</div>
<div class="a" style="left:0;top:285px;width:15px;height:1px;background:#9d9d9d"></div>
<div class="a" style="left:-16.7px;top:327.0px;width:40px;text-align:center;font-size:12.8px;color:#f2f2f2;line-height:1">5</div>
<div class="a" style="left:0;top:341px;width:15px;height:1px;background:#9d9d9d"></div>
<div class="a" style="left:-16.7px;top:347.0px;width:40px;text-align:center;font-size:12.8px;color:#f2f2f2;line-height:1">6</div>
<div class="a" style="left:0;top:361px;width:15px;height:1px;background:#9d9d9d"></div>
<div class="a" style="left:-16.7px;top:367.0px;width:40px;text-align:center;font-size:12.8px;color:#f2f2f2;line-height:1">7</div>
<div class="a" style="left:0;top:381px;width:15px;height:1px;background:#9d9d9d"></div>
<div class="a" style="left:-16.7px;top:387.0px;width:40px;text-align:center;font-size:12.8px;color:#f2f2f2;line-height:1">8</div>
<div class="a" style="left:0;top:401px;width:15px;height:1px;background:#9d9d9d"></div>
<div class="a" style="left:-16.7px;top:407.0px;width:40px;text-align:center;font-size:12.8px;color:#f2f2f2;line-height:1">9</div>
<div class="a" style="left:0;top:421px;width:15px;height:1px;background:#9d9d9d"></div>
<div class="a" style="left:-16.7px;top:427.0px;width:40px;text-align:center;font-size:12.8px;color:#f2f2f2;line-height:1">10</div>
<div class="a" style="left:0;top:441px;width:15px;height:1px;background:#9d9d9d"></div>
<div class="a" style="left:-16.7px;top:447.0px;width:40px;text-align:center;font-size:12.8px;color:#f2f2f2;line-height:1">11</div>
<div class="a" style="left:0;top:461px;width:15px;height:1px;background:#9d9d9d"></div>
<div class="a" style="left:-16.7px;top:467.0px;width:40px;text-align:center;font-size:12.8px;color:#f2f2f2;line-height:1">12</div>
<div class="a" style="left:0;top:481px;width:15px;height:1px;background:#9d9d9d"></div>
<div class="a" style="left:-16.7px;top:487.0px;width:40px;text-align:center;font-size:12.8px;color:#f2f2f2;line-height:1">13</div>
<div class="a" style="left:0;top:501px;width:15px;height:1px;background:#9d9d9d"></div>
<div class="a" style="left:-16.7px;top:507.0px;width:40px;text-align:center;font-size:12.8px;color:#f2f2f2;line-height:1">14</div>
<div class="a" style="left:0;top:521px;width:15px;height:1px;background:#9d9d9d"></div>
<div class="a" style="left:-16.7px;top:527.0px;width:40px;text-align:center;font-size:12.8px;color:#f2f2f2;line-height:1">15</div>
<div class="a" style="left:0;top:541px;width:15px;height:1px;background:#9d9d9d"></div>
<div class="a" style="left:-16.7px;top:547.0px;width:40px;text-align:center;font-size:12.8px;color:#f2f2f2;line-height:1">16</div>
<div class="a" style="left:0;top:561px;width:15px;height:1px;background:#9d9d9d"></div>
<div class="a" style="left:-16.7px;top:567.0px;width:40px;text-align:center;font-size:12.8px;color:#f2f2f2;line-height:1">17</div>
<div class="a" style="left:0;top:581px;width:15px;height:1px;background:#9d9d9d"></div>
<div class="a" style="left:-16.7px;top:587.0px;width:40px;text-align:center;font-size:12.8px;color:#f2f2f2;line-height:1">18</div>
<div class="a" style="left:0;top:601px;width:15px;height:1px;background:#9d9d9d"></div>
<div class="a" style="left:-16.7px;top:607.0px;width:40px;text-align:center;font-size:12.8px;color:#f2f2f2;line-height:1">19</div>
<div class="a" style="left:0;top:230px;width:15px;height:2px;background:#d0d0d0"></div>
<div class="a" style="left:15px;top:144px;width:1px;height:476px;background:#9d9d9d"></div>
<div class="a" style="left:100px;top:620px;width:60px;height:23px;background:#fff"></div>
<div class="a" style="left:0;top:620px;width:106px;height:23px;background:#505050;border-top-right-radius:6px"></div>
<div class="a" style="left:152px;top:620px;width:961px;height:23px;background:#505050;border-top-left-radius:6px"></div>
<div class="a" style="left:0;top:620px;width:16px;height:4px;background:#505050"></div>
<svg class="a" style="left:18.5px;top:631px;overflow:visible" width="7" height="10" viewBox="0 0 7 10"><path d="M6 0.5 L1 4.75 L6 9" fill="none" stroke="#9a9a9a" stroke-width="1.1"/></svg>
<svg class="a" style="left:51px;top:631px;overflow:visible" width="7" height="10" viewBox="0 0 7 10"><path d="M1 0.5 L6 4.75 L1 9" fill="none" stroke="#9a9a9a" stroke-width="1.1"/></svg>
<div class="a" style="left:114.2px;top:625.8px;font-size:13.6px;color:#303030;line-height:1;-webkit-text-stroke:0.35px #303030">Data</div>
<div class="a" style="left:156px;top:627px;width:1px;height:16px;background:#8a8a8a"></div>
<div class="a" style="left:170px;top:628.8px;font-size:13.7px;color:#ececec;line-height:1">Criteria</div>
<div class="a" style="left:227px;top:627px;width:1px;height:16px;background:#8a8a8a"></div>
<div class="a" style="left:242px;top:628.8px;font-size:14.2px;color:#ececec;line-height:1">Copyright Notice</div>
<div class="a" style="left:361px;top:627px;width:1px;height:16px;background:#8a8a8a"></div>
<svg class="a" style="left:404px;top:629px;overflow:visible" width="12" height="12" viewBox="0 0 12 12"><path d="M5.75 0 V11.5 M0 5.75 H11.5" stroke="#d8d8d8" stroke-width="1.1"/></svg>
<svg class="a" style="left:677.5px;top:632px;overflow:visible" width="3" height="10" viewBox="0 0 3 10"><rect x="0" y="0" width="2" height="2" fill="#d0d0d0"/><rect x="0" y="4" width="2" height="2" fill="#d0d0d0"/><rect x="0" y="8" width="2" height="2" fill="#d0d0d0"/></svg>
<div class="a" style="left:695px;top:627px;width:416px;height:22px;background:#3e3e3e;border-radius:8px"></div>
<svg class="a" style="left:700px;top:631px;overflow:visible" width="8" height="10" viewBox="0 0 8 10"><path d="M7 0.5 V9.5 L0.8 5 Z" fill="#c8c8c8"/></svg>
<div class="a" style="left:712px;top:631px;width:17px;height:10px;background:#c8c8c8;border-radius:5px"></div>
<svg class="a" style="left:1100px;top:631px;overflow:visible" width="8" height="10" viewBox="0 0 8 10"><path d="M1 0.5 V9.5 L7.2 5 Z" fill="#c8c8c8"/></svg>
</body></html>
